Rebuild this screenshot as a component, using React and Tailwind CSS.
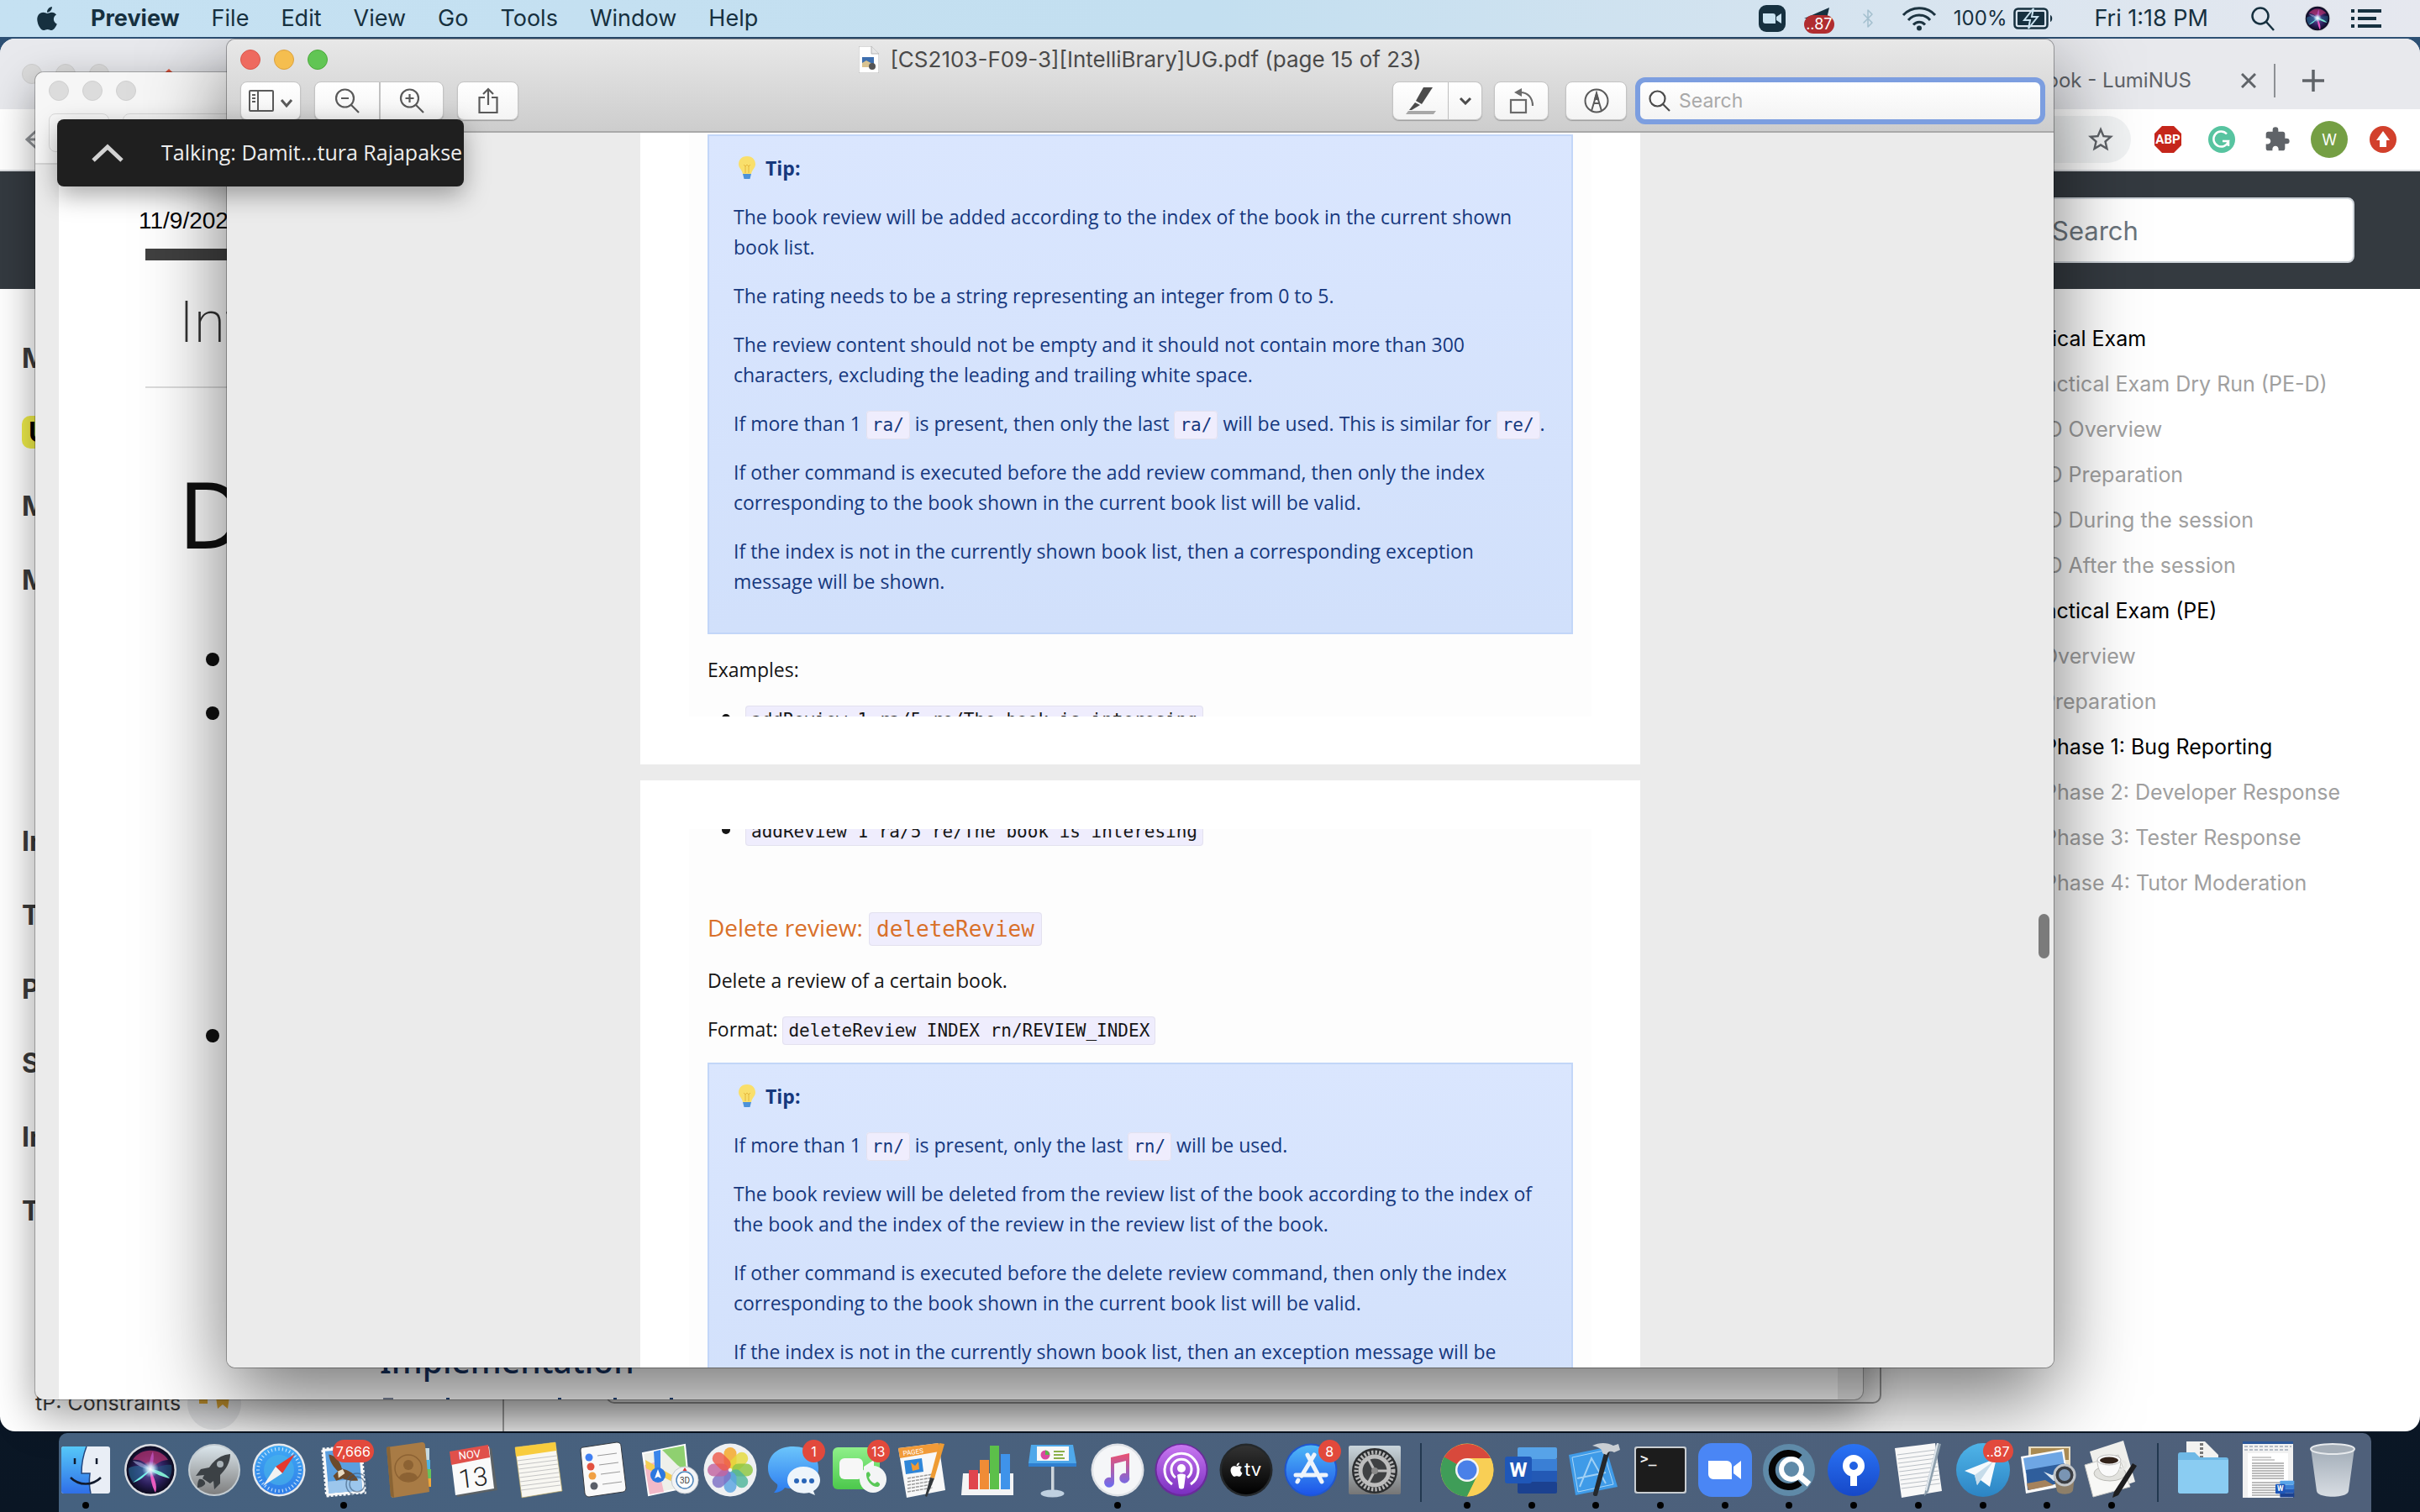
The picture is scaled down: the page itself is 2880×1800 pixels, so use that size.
import React from "react";
import { FaApple } from "react-icons/fa";
import { MdExtension, MdStarBorder } from "react-icons/md";
import { Bluetooth } from "lucide-react";

/* ---------- shared ---------- */

function Grad({ id, from, to, x2 = 0, y2 = 1 }) {
  return (
    <linearGradient id={id} x1="0" y1="0" x2={x2} y2={y2}>
      <stop offset="0" stopColor={from} />
      <stop offset="1" stopColor={to} />
    </linearGradient>
  );
}

function Icon({ children }) {
  return (
    <svg viewBox="0 0 64 64" className="block h-16 w-16 overflow-visible" aria-hidden="true">
      {children}
    </svg>
  );
}

function SiriArt({ id }) {
  return (
    <>
      <defs>
        <radialGradient id={id} cx="0.5" cy="0.5" r="0.5">
          <stop offset="0" stopColor="#6a5aa8" />
          <stop offset="0.6" stopColor="#2c1f5c" />
          <stop offset="1" stopColor="#0b0a1e" />
        </radialGradient>
        <radialGradient id={`${id}Glow`} cx="0.5" cy="0.5" r="0.5">
          <stop offset="0" stopColor="#fff" />
          <stop offset="0.4" stopColor="#d8f4ff" stopOpacity="0.8" />
          <stop offset="1" stopColor="#8fd8ff" stopOpacity="0" />
        </radialGradient>
      </defs>
      <circle cx="32" cy="32" r="31" fill="#d9dce2" />
      <circle cx="32" cy="32" r="28.500" fill={`url(#${id})`} />
      <path d="M11 20C20 5 44 5 53 20C46 20 40 24 32 30C26 22 18 19 11 20Z" fill="#b8326f" opacity=".7" />
      <path d="M6 30C14 25 25 27 32 32C26 38 18 44 11 46C7 40 6 36 6 30Z" fill="#2a6f9a" opacity=".6" />
      <path d="M57 26C50 25 40 28 32 32C40 36 48 40 54 42C57 38 58 32 57 26Z" fill="#1f5f86" opacity=".5" />
      <path d="M32 32C27 38 18 46 11 47C19 41 26 35 32 32Z" fill="#6ff0e4" />
      <path d="M32 32C36 40 41 50 38 59C35 54 31 42 32 32Z" fill="#ea5cc0" />
      <path d="M32 31C40 31 50 36 55 42C46 40 38 37 32 32Z" fill="#7fe8d0" />
      <path d="M31 32C30 24 32 16 35 10C37 18 35 26 32 32Z" fill="#c65ad0" opacity=".7" />
      <path d="M32 32C22 30 14 25 11 21C20 22 28 26 32 32Z" fill="#b9c8f0" opacity=".5" />
      <circle cx="32" cy="31" r="10" fill={`url(#${id}Glow)`} />
    </>
  );
}

/* ---------- menu bar ---------- */

function WifiIcon() {
  return (
    <svg viewBox="0 0 42 30" className="h-[30px] w-[42px]" fill="none" stroke="#1c3340" strokeWidth="3">
      <path d="M2 11C12 0 30 0 40 11" />
      <path d="M8 17C15 9 27 9 34 17" />
      <path d="M14 22.500C18 18 24 18 28 22.500" />
      <circle cx="21" cy="26.500" r="3" fill="#1c3340" stroke="none" />
    </svg>
  );
}

function MenuBar() {
  return (
    <header className="relative z-50 flex h-11 items-center justify-between bg-gradient-to-r from-[#c5e1f2] via-[#c3dff0] to-[#e6e8ef] pr-[46px] pl-[42px] text-[27px] text-[#16303f]">
      <nav className="flex items-center gap-[38px]">
        <FaApple className="h-8 w-7" />
        <b className="font-bold">Preview</b>
        <span>File</span>
        <span>Edit</span>
        <span>View</span>
        <span>Go</span>
        <span>Tools</span>
        <span>Window</span>
        <span>Help</span>
      </nav>
      <div className="flex items-center">
        <svg viewBox="0 0 32 32" className="mr-[22px] h-8 w-8">
          <rect width="32" height="32" rx="9" fill="#16303f" />
          <path d="M5 10h12a3 3 0 0 1 3 3v9H8a3 3 0 0 1-3-3zM21 14l6-4v12l-6-4z" fill="#c9e2f0" />
        </svg>
        <div className="relative mr-7 h-8 w-9">
          <svg viewBox="0 0 36 32" className="h-8 w-9">
            <path d="M0 16L30 3L27 16L10 16Z" fill="#16303f" />
          </svg>
          <span className="absolute top-3 left-0 flex h-[22px] w-9 items-center justify-center rounded-full bg-[#b02d30] text-[18px] leading-none text-white">..87</span>
        </div>
        <Bluetooth className="mr-7 h-8 w-6 text-[#a3bfce]" strokeWidth={1.5} />
        <WifiIcon />
        <span className="ml-5 text-[24px]">100%</span>
        <svg viewBox="0 0 48 26" className="ml-2 h-[26px] w-12" fill="none" stroke="#16303f" strokeWidth="2.500">
          <rect x="1.500" y="1.500" width="39" height="23" rx="4" />
          <path d="M44 9v8c3-1 3-7 0-8z" fill="#16303f" stroke="none" />
          <rect x="5" y="5" width="32" height="16" rx="1" fill="#16303f" stroke="none" />
          <path d="M24 1L13 15h7l-2 10 11-14h-7z" fill="#16303f" stroke="#c9e2f0" strokeWidth="2" />
        </svg>
        <span className="ml-12">Fri 1:18 PM</span>
        <svg viewBox="0 0 30 30" className="ml-[50px] h-[30px] w-[30px]" fill="none" stroke="#16303f" strokeWidth="2.500">
          <circle cx="12" cy="12" r="9.500" />
          <path d="M19 19l9 10" />
        </svg>
        <svg viewBox="0 0 64 64" className="ml-[34px] h-8 w-8">
          <SiriArt id="siriSmall" />
        </svg>
        <svg viewBox="0 0 36 22" className="ml-6 h-[22px] w-9" fill="#16303f">
          <rect y="0" width="4" height="4" /><rect x="8" y="0" width="28" height="4" />
          <rect y="9" width="4" height="4" /><rect x="8" y="9" width="22" height="4" />
          <rect y="18" width="4" height="4" /><rect x="8" y="18" width="28" height="4" />
        </svg>
      </div>
    </header>
  );
}

/* ---------- browser window ---------- */

const sideTop = ["M", "U", "M", "M"];
const sideBottom = ["In", "T", "P", "S", "In", "T"];
const toc = [
  { t: "Practical Exam", c: "ml-0 text-black" },
  { t: "Practical Exam Dry Run (PE-D)", c: "ml-7 text-[#a0a0a0]" },
  { t: "PE-D Overview", c: "ml-[14px] text-[#a0a0a0]" },
  { t: "PE-D Preparation", c: "ml-[14px] text-[#a0a0a0]" },
  { t: "PE-D During the session", c: "ml-[14px] text-[#a0a0a0]" },
  { t: "PE-D After the session", c: "ml-[14px] text-[#a0a0a0]" },
  { t: "Practical Exam (PE)", c: "ml-7 text-black" },
  { t: "Overview", c: "ml-[50px] text-[#a0a0a0]" },
  { t: "Preparation", c: "ml-[50px] text-[#a0a0a0]" },
  { t: "Phase 1: Bug Reporting", c: "ml-[52px] text-black" },
  { t: "Phase 2: Developer Response", c: "ml-[52px] text-[#a0a0a0]" },
  { t: "Phase 3: Tester Response", c: "ml-[52px] text-[#a0a0a0]" },
  { t: "Phase 4: Tutor Moderation", c: "ml-[52px] text-[#a0a0a0]" },
];

function GreyLights() {
  return (
    <>
      {[0, 1, 2].map((i) => (
        <span key={i} className="h-6 w-6 rounded-full border border-[#cfcfcf] bg-[#dcdcdc]" />
      ))}
    </>
  );
}

function BrowserWindow() {
  return (
    <section className="absolute inset-x-0 top-[46px] bottom-24 flex flex-col overflow-hidden rounded-[18px] bg-white">
      <div className="flex h-[84px] items-center justify-between bg-[#e8e9ed] pl-[26px]">
        <div className="flex items-center gap-4">
          <GreyLights />
          <svg viewBox="0 0 30 26" className="ml-10 h-[26px] w-[30px]" fill="none" stroke="#e0553c" strokeWidth="3"><path d="M2 21L15 9L28 21" /></svg>
        </div>
        <div className="flex items-center pt-4 pr-[114px] text-[24px] text-[#5f6368]">
          <span>iLecture Book - LumiNUS</span>
          <svg viewBox="0 0 18 18" className="ml-[59px] h-[18px] w-[18px]" stroke="#5f6368" strokeWidth="3"><path d="M1 1L17 17M17 1L1 17" /></svg>
          <span className="ml-[21px] h-10 w-0.5 bg-[#8d9094]" />
          <svg viewBox="0 0 26 26" className="ml-8 h-[26px] w-[26px]" stroke="#5f6368" strokeWidth="3.500"><path d="M13 0V26M0 13H26" /></svg>
        </div>
      </div>
      <div className="flex h-[74px] items-center justify-between border-b-2 border-[#dadce0] bg-white pr-7 pl-[30px]">
        <svg viewBox="0 0 26 26" className="h-[26px] w-[26px]" fill="none" stroke="#8f9296" strokeWidth="3"><path d="M14 2L2 13L14 24M2 13H26" /></svg>
        <div className="flex items-center">
          <div className="mr-7 flex h-14 w-[600px] items-center justify-end rounded-full bg-[#f1f3f4] pr-[18px]">
            <MdStarBorder className="h-9 w-9 text-[#5f6368]" />
          </div>
          <svg viewBox="0 0 32 32" className="mr-8 h-8 w-8">
            <path d="M9 0h14l9 9v14l-9 9H9l-9-9V9z" fill="#c5261b" />
            <text x="16" y="21" textAnchor="middle" fontSize="15" fontWeight="700" fill="#fff" fontFamily="Roboto">ABP</text>
          </svg>
          <svg viewBox="0 0 32 32" className="mr-[34px] h-8 w-8">
            <circle cx="16" cy="16" r="16" fill="#57c4a0" />
            <path d="M22 9.500A9 9 0 1 0 24 18H17M24 18V24" fill="none" stroke="#fff" strokeWidth="2.500" />
          </svg>
          <MdExtension className="mr-6 h-8 w-8 text-[#5f6368]" />
          <span className="mr-[26px] flex h-11 w-11 items-center justify-center rounded-full bg-[#759f44] text-[18px] text-white">W</span>
          <svg viewBox="0 0 32 32" className="h-8 w-8">
            <circle cx="16" cy="16" r="16" fill="#d2402c" />
            <path d="M16 6l8 11h-4v8h-8v-8H8z" fill="#fff" />
          </svg>
        </div>
      </div>
      <div className="flex h-[140px] items-center justify-end bg-[#343a40] pr-[78px]">
        <input
          aria-label="Search"
          placeholder="Search"
          className="h-[78px] w-[382px] rounded-lg border-2 border-[#ced4da] bg-white pl-5 text-[31px] text-[#6c757d] placeholder:text-[#6c757d]"
        />
      </div>
      <div className="flex flex-1 justify-between">
        <ul className="w-14 pt-[39px] pl-[26px] text-[32px] leading-[88px] font-bold text-[#3b3b3b]">
          {sideTop.map((s, i) => (
            <li key={i}>
              {s === "U" ? <span className="rounded-[10px] bg-[#f0ee4a] px-2 text-black">{s}</span> : s}
            </li>
          ))}
          <li className="h-[223px]" />
          {sideBottom.map((s, i) => (
            <li key={i}>{s}</li>
          ))}
        </ul>
        <ul className="w-[500px] pt-8 text-[25px] leading-[54px] whitespace-nowrap">
          {toc.map((r) => (
            <li key={r.t} className={r.c}>{r.t}</li>
          ))}
        </ul>
      </div>
      <div className="absolute bottom-0 left-0 flex h-[60px] w-[600px] items-center border-r-2 border-[#a5a5a5] pb-1.5 pl-[42px]">
        <span className="text-[25px] text-[#3a3a3a]">tP: Constraints</span>
        <span className="ml-2 flex h-[62px] w-16 items-center justify-center rounded-full bg-[#ecedef]">
          <svg viewBox="0 0 44 20" className="h-5 w-11" fill="#dca636"><path d="M4 5h10v5H4zM24 2h16l-2 14-6-5-6 5z" /></svg>
        </span>
      </div>
      <div className="absolute right-[641px] bottom-[33px] left-[721px] h-40 rounded-[10px] border-2 border-[#a0a0a0]" />
    </section>
  );
}

/* ---------- document window behind ---------- */

function BackWindow() {
  return (
    <section className="absolute top-[86px] right-[663px] bottom-[134px] left-[42px] flex flex-col overflow-hidden rounded-[10px] bg-[#ebebeb] shadow-[0_0_0_1px_rgba(0,0,0,0.25),0_18px_50px_rgba(0,0,0,0.4)]">
      <div className="h-[110px] border-b-2 border-[#d6d6d6] bg-[#f6f6f6] px-4 pt-[10px]">
        <div className="flex gap-4"><GreyLights /></div>
        <div className="mt-[15px] flex gap-4">
          <span className="h-[46px] w-[72px] rounded-lg border border-[#dadada] bg-[#f8f8f8]" />
          <span className="h-[46px] w-[150px] rounded-lg border border-[#dadada] bg-[#f8f8f8]" />
        </div>
      </div>
      <div className="mr-[30px] ml-7 flex flex-1 flex-col bg-white">
        <p className="mt-[47px] ml-[95px] font-[Liberation_Sans] text-[28px] leading-[40px] text-black">11/9/2020</p>
        <div className="mt-[13px] ml-[103px] h-[14px] bg-[#404040]" />
        <p className="mt-[32px] ml-[143px] font-[Roboto] text-[68px] leading-[84px] font-extralight text-[#333]">IntelliBrary</p>
        <div className="mt-[34px] ml-[103px] h-0.5 shrink-0 bg-[#dcdcdc]" />
        <h2 className="mt-[78px] ml-[142px] font-[Noto_Sans] text-[110px] leading-[140px] text-[#101010]">Developer Guide</h2>
        <ul className="mt-[97px] ml-[175px]">
          <li className="h-16"><span className="block h-4 w-4 rounded-full bg-[#101010]" /></li>
          <li className="h-[384px]"><span className="block h-4 w-4 rounded-full bg-[#101010]" /></li>
          <li><span className="block h-4 w-4 rounded-full bg-[#101010]" /></li>
        </ul>
        <h3 className="mt-auto ml-[382px] font-[Noto_Sans] text-[39px] leading-[54px] font-medium text-[#16325f]">Implementation</h3>
        <div className="mt-[17px] ml-[386px] flex h-0.5 justify-between pr-[1386px]">
          <i className="w-3 bg-[#7d879b]" /><i className="w-1 bg-[#24457a]" /><i className="w-1" /><i className="w-1 bg-[#24457a]" /><i className="w-1 bg-[#24457a]" /><i className="w-1 bg-[#24457a]" />
        </div>
      </div>
    </section>
  );
}

/* ---------- Preview window ---------- */

function ToolButton({ label, className, children }) {
  return (
    <button
      type="button"
      aria-label={label}
      className={`flex h-[46px] items-center justify-center border border-[#c4c4c4] bg-gradient-to-b from-white to-[#f4f4f4] shadow-[0_1px_1px_rgba(0,0,0,0.25)] ${className}`}
    >
      {children}
    </button>
  );
}

function Toolbar() {
  return (
    <div className="flex items-center justify-between pr-[10px] pl-4">
      <div className="flex items-center">
        <ToolButton label="Sidebar" className="mr-4 w-[72px] rounded-lg">
          <svg viewBox="0 0 54 28" className="h-7 w-[54px]" fill="none" stroke="#5a5a5a" strokeWidth="2">
            <rect x="2" y="2" width="28" height="24" rx="1" />
            <path d="M12 2V26M5 7h4M5 11h4M5 15h4" />
            <path d="M40 13l6 7 6-7" strokeWidth="3" />
          </svg>
        </ToolButton>
        <ToolButton label="Zoom out" className="w-[78px] rounded-l-lg">
          <svg viewBox="0 0 30 30" className="h-[30px] w-[30px]" fill="none" stroke="#5a5a5a" strokeWidth="2.200">
            <circle cx="12.500" cy="12" r="10.500" /><path d="M20 20l9 9M8 12h9" />
          </svg>
        </ToolButton>
        <ToolButton label="Zoom in" className="mr-4 w-[76px] rounded-r-lg">
          <svg viewBox="0 0 30 30" className="h-[30px] w-[30px]" fill="none" stroke="#5a5a5a" strokeWidth="2.200">
            <circle cx="12.500" cy="12" r="10.500" /><path d="M20 20l9 9M7.500 12h10M12.500 7v10" />
          </svg>
        </ToolButton>
        <ToolButton label="Share" className="w-[73px] rounded-lg">
          <svg viewBox="0 0 26 32" className="h-8 w-[26px]" fill="none" stroke="#5a5a5a" strokeWidth="2.200">
            <path d="M9 12H2.500V30H23.500V12H17M13 21V2M7 8l6-6 6 6" />
          </svg>
        </ToolButton>
      </div>
      <div className="flex items-center">
        <ToolButton label="Highlight" className="w-[67px] rounded-l-lg">
          <svg viewBox="0 0 38 34" className="h-[34px] w-[38px]">
            <path d="M22 1H33L20 21L13 17Z" fill="#4b4b4b" />
            <path d="M12 19L18 22L8 28H5Z" fill="#4b4b4b" />
            <path d="M4 29H37L34 33H1Z" fill="#a8a8a8" />
          </svg>
        </ToolButton>
        <ToolButton label="Highlight colour" className="mr-[14px] w-10 rounded-r-lg border-l-0">
          <svg viewBox="0 0 16 10" className="h-[10px] w-4" fill="none" stroke="#4b4b4b" strokeWidth="3"><path d="M2 2l6 6 6-6" /></svg>
        </ToolButton>
        <ToolButton label="Rotate" className="mr-5 w-[65px] rounded-lg">
          <svg viewBox="0 0 32 32" className="h-8 w-8" fill="none" stroke="#6a6a6a" strokeWidth="2.200">
            <rect x="3" y="15" width="18" height="15" /><path d="M14 6C24 6 29 13 29 22" /><path d="M7 6l9-5v10z" fill="#6a6a6a" stroke="none" />
          </svg>
        </ToolButton>
        <ToolButton label="Markup" className="mr-[10px] w-[73px] rounded-lg">
          <svg viewBox="0 0 30 30" className="h-[30px] w-[30px]" fill="none" stroke="#5a5a5a" strokeWidth="2">
            <circle cx="15" cy="15" r="13.500" /><path d="M9 27L15 7L21 27M12.500 18h5" /><path d="M13 13l2-7 2 7z" fill="#5a5a5a" />
          </svg>
        </ToolButton>
        <label className="flex h-14 w-[488px] items-center gap-[10px] rounded-xl border-[6px] border-[#7c9ee0] bg-gradient-to-b from-white to-[#f4f4f4] pl-[10px]">
          <svg viewBox="0 0 26 26" className="h-[26px] w-[26px]" fill="none" stroke="#4a4a4a" strokeWidth="2.200">
            <circle cx="10.500" cy="10.500" r="9" /><path d="M17 17l8 8" />
          </svg>
          <input aria-label="Search document" placeholder="Search" className="min-w-0 flex-1 bg-transparent text-[23px] outline-none placeholder:text-[#a9a9a9]" />
        </label>
      </div>
    </div>
  );
}

function Code({ children }) {
  return (
    <code className="rounded-[4px] border border-[#e3e1ef] bg-[#efedfd] px-1.5 py-1 font-[DejaVu_Sans_Mono] text-[21px] leading-none">{children}</code>
  );
}

function Bulb() {
  return (
    <svg viewBox="0 0 20 28" className="mr-3 ml-1.5 h-7 w-5">
      <path d="M10 0C3 0 0 5 0 9.500C0 14 4 16 5 21H15C16 16 20 14 20 9.500C20 5 17 0 10 0Z" fill="#f9df6b" />
      <path d="M6 10l2 2 2-2 2 2 2-2M8 12v8M12 12v8" stroke="#e4b63c" fill="none" />
      <path d="M5 21H15L13.500 27H6.500Z" fill="#4d92d8" />
    </svg>
  );
}

function Tip({ children }) {
  return (
    <div className="flex flex-col gap-[22px] border-2 border-[#c2d6f8] bg-gradient-to-b from-[#dae6fe] to-[#d1e0fb] px-[29px] pt-5 pb-[43px] whitespace-nowrap text-[#16387d]">
      <p className="flex items-center font-bold"><Bulb />Tip:</p>
      {children}
    </div>
  );
}

function AddReviewItem() {
  return (
    <ul>
      <li className="flex items-center pl-[17px]">
        <span className="mr-[18px] h-[10px] w-[10px] rounded-full bg-[#151515]" />
        <span><Code>addReview 1 ra/5 re/The book is interesing</Code></span>
      </li>
    </ul>
  );
}

function Document() {
  return (
    <div className="relative flex min-h-0 flex-1 flex-col items-center gap-[19px] overflow-hidden bg-[#ebebeb] font-[Open_Sans] text-[23px] leading-[36px] text-[#151515]">
      <article className="w-[1190px] shrink-0 bg-white px-[58px] pb-[57px]">
        <div className="h-[695px] overflow-hidden bg-[#fdfdfd] px-[22px] pt-0.5">
          <Tip>
            <p>The book review will be added according to the index of the book in the current shown<br />book list.</p>
            <p>The rating needs to be a string representing an integer from 0 to 5.</p>
            <p>The review content should not be empty and it should not contain more than 300<br />characters, excluding the leading and trailing white space.</p>
            <p>If more than 1 <Code>ra/</Code> is present, then only the last <Code>ra/</Code> will be used. This is similar for <Code>re/</Code>.</p>
            <p>If other command is executed before the add review command, then only the index<br />corresponding to the book shown in the current book list will be valid.</p>
            <p>If the index is not in the currently shown book list, then a corresponding exception<br />message will be shown.</p>
          </Tip>
          <p className="mt-6 mb-[22px]">Examples:</p>
          <AddReviewItem />
        </div>
      </article>
      <article className="w-[1190px] shrink-0 bg-white px-[58px] pt-[58px]">
        <div className="overflow-hidden bg-[#fdfdfd] px-[22px]">
          <div className="-mt-[17px]"><AddReviewItem /></div>
          <h3 className="mt-[76px] text-[28px] leading-[44px] text-[#d9702a]">
            Delete review: <code className="rounded-[4px] border border-[#e3e1ef] bg-[#efedfd] px-2 py-1 font-[DejaVu_Sans_Mono] text-[26px] leading-none">deleteReview</code>
          </h3>
          <p className="mt-[23px]">Delete a review of a certain book.</p>
          <p className="mt-[22px] mb-[22px]">Format: <Code>deleteReview INDEX rn/REVIEW_INDEX</Code></p>
          <Tip>
            <p>If more than 1 <Code>rn/</Code> is present, only the last <Code>rn/</Code> will be used.</p>
            <p>The book review will be deleted from the review list of the book according to the index of<br />the book and the index of the review in the review list of the book.</p>
            <p>If other command is executed before the delete review command, then only the index<br />corresponding to the book shown in the current book list will be valid.</p>
            <p>If the index is not in the currently shown book list, then an exception message will be<br />shown.</p>
          </Tip>
        </div>
      </article>
      <span className="absolute top-[930px] right-[5px] h-[53px] w-[13px] rounded-full bg-[#7b7b7b]" />
    </div>
  );
}

function PreviewWindow() {
  return (
    <section className="absolute top-[47px] right-[436px] bottom-[172px] left-[270px] flex flex-col overflow-hidden rounded-[10px] shadow-[0_0_0_1px_rgba(0,0,0,0.3),0_36px_100px_rgba(0,0,0,0.55)]">
      <div className="flex h-[111px] flex-col border-b-2 border-[#a9a9a9] bg-gradient-to-b from-[#e8e8e8] to-[#cdcdcd]">
        <div className="flex h-[45px] items-center justify-center pt-0.5">
          <div className="flex flex-1 gap-4 pl-4">
            <span className="h-6 w-6 rounded-full border border-[#d9574b] bg-[#ee6a5f]" />
            <span className="h-6 w-6 rounded-full border border-[#dba13f] bg-[#f5be4f]" />
            <span className="h-6 w-6 rounded-full border border-[#4ca93c] bg-[#61c554]" />
          </div>
          <h1 className="flex items-center gap-[13px] text-[26px] text-[#4a4a4a]">
            <svg viewBox="0 0 24 32" className="h-8 w-6">
              <path d="M0 0H15L24 9V32H0Z" fill="#fff" stroke="#b5b5b5" />
              <path d="M15 0V9H24" fill="#e6e6e6" stroke="#b5b5b5" />
              <rect x="4" y="13" width="14" height="12" fill="#3e6fae" /><path d="M4 20l5-3 9 5v3H4z" fill="#d9c391" /><circle cx="16" cy="24" r="4" fill="#555" />
            </svg>
            [CS2103-F09-3][IntelliBrary]UG.pdf (page 15 of 23)
          </h1>
          <div className="flex-1 pr-4" />
        </div>
        <Toolbar />
      </div>
      <Document />
    </section>
  );
}

function TalkingBar() {
  return (
    <aside className="absolute top-[142px] left-[68px] flex h-20 w-[484px] items-center gap-[45px] overflow-hidden rounded-lg bg-[#1f1f1f] pl-[41px] shadow-[0_10px_30px_rgba(0,0,0,0.35)]">
      <svg viewBox="0 0 38 22" className="h-[22px] w-[38px] shrink-0" fill="none" stroke="#d2d2d2" strokeWidth="5"><path d="M2 20L19 4L36 20" /></svg>
      <span className="font-[Open_Sans] text-[25px] whitespace-nowrap text-[#ededed]">Talking: Damit...tura Rajapakse</span>
    </aside>
  );
}

/* ---------- dock icons ---------- */

const rays = Array.from({ length: 36 }, (_, i) => i * 10);

const Finder = () => (
  <Icon>
    <defs><Grad id="fnd" from="#56c8f8" to="#2f6fe8" /></defs>
    <rect x="3" y="4" width="58" height="56" rx="3" fill="#e9eef6" />
    <path d="M6 4H33C29 14 27 24 27 36H37C36 44 36 52 38 60H6a3 3 0 0 1-3-3V7a3 3 0 0 1 3-3z" fill="url(#fnd)" />
    <path d="M33 4C29 14 27 24 27 36H37C36 44 36 52 38 60" fill="none" stroke="#23457c" strokeWidth="1.500" />
    <path d="M19 18v7M45 18v7" stroke="#111a2c" strokeWidth="2.500" />
    <path d="M14 41C24 51 40 51 50 41" fill="none" stroke="#111a2c" strokeWidth="2.500" />
  </Icon>
);
const Siri = () => <Icon><SiriArt id="siriDock" /></Icon>;
const Launchpad = () => (
  <Icon>
    <defs><Grad id="lp" from="#dbe6ec" to="#7f7f7f" /></defs>
    <circle cx="32" cy="32" r="31" fill="#c3ccd2" /><circle cx="32" cy="32" r="29" fill="url(#lp)" />
    <path d="M51 13C40 14 32 20 26 29L16 31L10 39L20 38L18 42L27 48L31 45L32 55L39 48L39 38C46 31 51 23 51 13Z" fill="#3c4145" />
    <circle cx="39" cy="25" r="4" fill="#a9b2b7" /><path d="M14 43C18 42 22 46 21 49C18 52 15 53 12 53C12 49 12 46 14 43Z" fill="#3c4145" />
  </Icon>
);
const Safari = () => (
  <Icon>
    <defs><Grad id="sf" from="#3fa9f5" to="#2f7de8" /></defs>
    <circle cx="32" cy="32" r="31.500" fill="#e7e9ec" /><circle cx="32" cy="32" r="29" fill="url(#sf)" /><circle cx="32" cy="32" r="18" fill="#4ab6ea" opacity=".6" />
    {rays.map((a) => <path key={a} d="M32 5V9" stroke="#d8ecfb" strokeWidth="1" transform={`rotate(${a} 32 32)`} />)}
    <path d="M51 13L36 36L28 28Z" fill="#e5392f" /><path d="M13 51L28 28L36 36Z" fill="#f2f2f2" />
  </Icon>
);
const Mail = () => (
  <Icon>
    <g transform="rotate(-5 32 32)">
      <rect x="9" y="5" width="46" height="56" fill="#f8f8f8" stroke="#f8f8f8" strokeWidth="3" strokeDasharray="3 2" />
      <rect x="12" y="8" width="40" height="50" fill="#5a9fe0" />
      <path d="M12 44h40v14H12z" fill="#9cc6ec" />
      <path d="M16 12C24 14 29 22 30 30C38 33 46 38 48 46C40 46 34 44 30 42L22 44L19 38L25 33C20 27 16 20 16 12Z" fill="#6b4a2c" />
      <path d="M25 33l6-2 2 5-8 5z" fill="#e8dcc4" />
    </g>
    <circle cx="48" cy="49" r="13" fill="none" stroke="#3b5878" strokeWidth="1.500" opacity=".6" /><circle cx="48" cy="49" r="9" fill="none" stroke="#3b5878" strokeWidth="1.500" opacity=".6" />
  </Icon>
);
const Contacts = () => (
  <Icon>
    <rect x="50" y="6" width="7" height="14" fill="#c6dbe2" /><rect x="51" y="20" width="7" height="11" fill="#4fb4e4" /><rect x="52" y="31" width="7" height="11" fill="#65c45a" /><rect x="53" y="42" width="6" height="10" fill="#f0a73a" />
    <path d="M6 5L48 -1C51 -1 52 1 52 3L57 58L14 65C12 65 11 63 11 62Z" fill="#a87b45" />
    <path d="M6 5L10 4L15 65L11 63Z" fill="#8a6434" />
    <circle cx="32" cy="30" r="16" fill="none" stroke="#8c6233" strokeWidth="1.500" /><circle cx="32" cy="26" r="6" fill="#8c6233" /><path d="M21 41C23 33 41 33 43 41C38 47 26 47 21 41Z" fill="#8c6233" />
  </Icon>
);
const Calendar = () => (
  <Icon>
    <path d="M8 14L55 6L62 56L14 64Z" fill="#5c6266" />
    <path d="M6 12L52 4L58 54L12 62Z" fill="#fafafa" /><path d="M5 10L51 2L53 17L7 26Z" fill="#e0504a" />
    <g fontFamily="Roboto" textAnchor="middle" transform="rotate(-7 32 32)">
      <text x="31" y="18" fontSize="13" fill="#fff">NOV</text><text x="32" y="52" fontSize="31" fontWeight="300" fill="#222">13</text>
    </g>
  </Icon>
);
const Notes = () => (
  <Icon>
    <path d="M6 5L54 -1L62 57L14 65Z" fill="#f8f7f2" stroke="#b6a35e" strokeWidth=".7" /><path d="M6 5L54 -1L55 9L7 16Z" fill="#f8cc3d" />
    {[21, 26, 31, 36, 41, 46, 51, 56].map((y) => <path key={y} d={`M${8 + (y - 16) / 8} ${y}l47 -6`} stroke="#c5c5c5" />)}
  </Icon>
);
const Reminders = () => (
  <Icon>
    <path d="M10 5L50 -1C53 -1 55 1 55 3L61 53C61 56 60 57 58 58L17 64C14 64 13 62 12 60L7 9C7 6 8 5 10 5Z" fill="#f9f9f9" stroke="#363a40" strokeWidth="1" />
    {[["#3f7ff2", 17], ["#e3513f", 28], ["#f0a043", 39], ["#5a5f68", 51]].map(([c, y], i) => (
      <g key={y}><circle cx={17 + i * 2} cy={y} r="4.500" fill={c} /><path d={`M${27 + i * 2} ${y - 2}l23 -3`} stroke="#9a9a9a" /></g>
    ))}
  </Icon>
);
const Maps = () => (
  <Icon>
    <path d="M5 12L55 2L60 52L12 62Z" fill="#eef0ea" stroke="#fff" strokeWidth="2" />
    <path d="M7 26L22 22L30 58L13 61Z" fill="#f3b9c8" /><path d="M28 8L54 3L57 34L46 26Z" fill="#8fd070" /><path d="M8 20L50 44L52 52L9 30Z" fill="#f5cf53" />
    <path d="M18 10L26 8V40L20 42Z" fill="#3a86ea" /><circle cx="23" cy="38" r="9" fill="#2d78e0" /><path d="M23 31l4 11-4-2-4 2z" fill="#fff" />
    <circle cx="55" cy="44" r="16" fill="#f2f4f6" stroke="#c5c9cd" /><circle cx="55" cy="44" r="10" fill="#fff" stroke="#4f86bb" strokeWidth="1.500" />
    <text x="55" y="48" fontSize="10" textAnchor="middle" fill="#444" fontFamily="Roboto">3D</text><path d="M55 29l2.500 4h-5z" fill="#d33" />
  </Icon>
);
const Photos = () => (
  <Icon>
    <circle cx="32" cy="32" r="31.500" fill="#eef0f2" />
    {["#f5a623", "#e5d93c", "#8cc63f", "#4fb59a", "#5aa4e0", "#7d6fc4", "#c263a0", "#ee5a4a"].map((c, i) => (
      <rect key={c} x="24.500" y="5" width="15" height="25" rx="7.500" fill={c} opacity=".82" transform={`rotate(${i * 45} 32 32)`} />
    ))}
  </Icon>
);
const Messages = () => (
  <Icon>
    <defs><Grad id="ms" from="#6cc5fb" to="#2c7cf0" /></defs>
    <path d="M30 4C50 4 60 16 60 30C60 46 46 54 30 54C26 54 23 54 20 53C17 57 12 59 7 59C10 56 12 52 11 49C4 44 0 38 0 30C0 14 12 4 30 4Z" fill="url(#ms)" />
    <path d="M42 28C54 28 62 35 62 44C62 50 58 55 54 57L56 62L49 59C34 62 23 54 23 44C23 35 31 28 42 28Z" fill="#eef5fb" />
    <circle cx="34" cy="45" r="3" fill="#2a66b8" /><circle cx="43" cy="45" r="3" fill="#2a66b8" /><circle cx="52" cy="45" r="3" fill="#2a66b8" />
  </Icon>
);
const FaceTime = () => (
  <Icon>
    <defs><Grad id="ft" from="#8ff08a" to="#4cc84c" /></defs>
    <rect x="0" y="5" width="56" height="50" rx="6" fill="url(#ft)" /><rect x="8" y="18" width="28" height="25" rx="6" fill="#f7f7f7" /><path d="M37 28l12-8v20l-12-6z" fill="#f7f7f7" />
    <circle cx="48" cy="43" r="16" fill="#f3f5f5" /><path d="M40 36C42 33 44 34 45 38L43 41C44 44 47 47 50 48L53 46C57 48 57 50 54 52C47 53 39 44 40 36Z" fill="#59c857" />
  </Icon>
);
const Pages = () => (
  <Icon>
    <path d="M2 6L50 0L58 56L12 65Z" fill="#f8f8f8" /><path d="M2 6L50 0L51 10L4 18Z" fill="#f19a38" />
    <text x="8" y="15" fontSize="8" fill="#fff" fontFamily="Roboto" transform="rotate(-8 8 15)">PAGES</text>
    <path d="M9 21L30 18L32 34L11 37Z" fill="#2f86d8" /><path d="M17 23l5 4 4-5 1 9-8 2z" fill="#f39a30" />
    {[42, 46, 50, 54, 58].map((y) => <path key={y} d={`M13 ${y}l30 -5`} stroke="#9a9a9a" strokeWidth="1.500" strokeDasharray="4 1" />)}
    <path d="M51 0L57 1L45 42L40 41Z" fill="#ee9b33" /><path d="M40 41L45 42L36 64L34 63Z" fill="#33373b" />
  </Icon>
);
const Numbers = () => (
  <Icon>
    <path d="M2 36H62V62H0Z" fill="#f3f4f5" />
    <rect x="9" y="32" width="11" height="23" fill="#e0454e" /><rect x="22" y="20" width="11" height="35" fill="#f08c36" /><rect x="34" y="3" width="11" height="52" fill="#5cc04a" /><rect x="47" y="13" width="11" height="42" fill="#3f93ea" />
  </Icon>
);
const Keynote = () => (
  <Icon>
    <path d="M6 2H56L60 24H3Z" fill="#4fa8ea" /><path d="M3 24H60V28H3Z" fill="#2f7fd0" /><rect x="13" y="4" width="38" height="17" fill="#f8f8f8" />
    <circle cx="23" cy="14" r="5.500" fill="#d94aa0" /><path d="M23 14V8.500A5.500 5.500 0 0 1 28 14Z" fill="#58b84a" /><path d="M33 10h13M33 14h11M33 18h13" stroke="#8bb04a" strokeWidth="2" />
    <rect x="30" y="28" width="3.500" height="32" fill="#cdd5dc" /><ellipse cx="31.500" cy="60" rx="14" ry="4.500" fill="#bfd0e0" />
  </Icon>
);
const Music = () => (
  <Icon>
    <defs><Grad id="mu" from="#ec5170" to="#6a6cf0" /></defs>
    <circle cx="32" cy="32" r="31.500" fill="#dfe2e7" /><circle cx="32" cy="32" r="29" fill="#f5f6f8" />
    <path d="M24 17L46 12V40A6 6 0 1 1 42 36V21L28 24.500V46A6 6 0 1 1 24 41Z" fill="url(#mu)" />
  </Icon>
);
const Podcasts = () => (
  <Icon>
    <defs><Grad id="pc" from="#c877f0" to="#7a2fc0" /></defs>
    <circle cx="32" cy="32" r="31.500" fill="#6a2a9c" /><circle cx="32" cy="31.500" r="29.500" fill="url(#pc)" />
    <path d="M21 49A20 20 0 1 1 43 49M25 41A12 12 0 1 1 39 41" fill="none" stroke="#fff" strokeWidth="3" />
    <circle cx="32" cy="30" r="5" fill="#fff" /><path d="M27 38C29 36 35 36 37 38L35 53C34 55 30 55 29 53Z" fill="#fff" />
  </Icon>
);
const AppleTv = () => (
  <Icon>
    <defs><Grad id="atv" from="#333" to="#000" /></defs>
    <circle cx="32" cy="32" r="31.500" fill="#24282b" /><circle cx="32" cy="32" r="29" fill="url(#atv)" />
    <g transform="translate(11 22)"><FaApple size={19} color="#fff" /></g>
    <text x="30" y="39" fontSize="22" fill="#fff" fontFamily="Inter">tv</text>
  </Icon>
);
const AppStore = () => (
  <Icon>
    <defs><Grad id="as" from="#4fb8f8" to="#1c54e8" /></defs>
    <circle cx="32" cy="32" r="31.500" fill="#1f56cf" /><circle cx="32" cy="32" r="29.500" fill="url(#as)" />
    <g stroke="#eef4fb" strokeWidth="5" strokeLinecap="round"><path d="M28 14L45 46M36 14L21 39M14 38H37M44 38H50M17 44L16 46" /></g>
  </Icon>
);
const Prefs = () => (
  <Icon>
    <defs><Grad id="pf" from="#c9d5dc" to="#767676" /></defs>
    <rect x="1" y="3" width="62" height="58" rx="2" fill="url(#pf)" />
    <circle cx="32" cy="33" r="27" fill="#2b2d2f" /><circle cx="32" cy="33" r="22" fill="none" stroke="#b5b5b5" strokeWidth="5" strokeDasharray="2.500 2" />
    <circle cx="32" cy="33" r="17" fill="#3f4143" stroke="#bdbdbd" strokeWidth="5" /><path d="M32 33L24 18M32 33L24 48M32 33H49" stroke="#bdbdbd" strokeWidth="3" /><circle cx="32" cy="33" r="4" fill="#8a8a8a" />
  </Icon>
);
const Chrome = () => (
  <Icon>
    <circle cx="32" cy="32" r="31.500" fill="#f6c945" />
    <path d="M32 32L4.500 17A31.500 31.500 0 0 1 60 18H32Z" fill="#d8493c" /><path d="M32 32L4.700 16.500A31.500 31.500 0 0 0 32 63.500L44 39Z" fill="#3f9d58" /><path d="M32 18H60A31.500 31.500 0 0 1 32 63.500L44 39Z" fill="#f9cf55" />
    <circle cx="32" cy="32" r="14" fill="#f5f5f5" /><circle cx="32" cy="32" r="11.500" fill="#4a80e8" />
  </Icon>
);
const WordTile = ({ small }) => (
  <g transform={small ? "translate(41 43) scale(.36)" : ""}>
    <rect x="15" y="5" width="47" height="14" rx="2" fill="#57a3e8" /><rect x="15" y="19" width="47" height="14" fill="#3a7fd5" /><rect x="15" y="33" width="47" height="13" fill="#2359b5" /><rect x="15" y="46" width="47" height="14" rx="2" fill="#1b4190" />
    <rect x="0" y="16" width="32" height="32" rx="3" fill="#1f57b8" />
    <text x="16" y="40" fontSize="24" fontWeight="700" textAnchor="middle" fill="#fff" fontFamily="Roboto">W</text>
  </g>
);
const Word = () => <Icon><WordTile /></Icon>;
const Xcode = () => (
  <Icon>
    <path d="M0 14L44 5L58 52L8 62Z" fill="#3f9be8" /><path d="M4 17L41 9L53 49L11 58Z" fill="none" stroke="#a9d6f7" />
    <path d="M13 52L27 18L44 48M10 42L44 35" stroke="#9fd0f5" strokeWidth="2" fill="none" />
    <path d="M43 8L49 9L34 62C33 64 28 63 29 60Z" fill="#24282c" /><path d="M28 3C36 -1 46 -1 53 3L59 1L61 8L54 11C50 9 47 9 45 14L40 12C40 7 36 5 28 3Z" fill="#c9ced3" />
  </Icon>
);
const Terminal = () => (
  <Icon>
    <rect x="1" y="4" width="62" height="56" rx="3" fill="#c9cdd1" /><rect x="3" y="6" width="58" height="52" rx="2" fill="#1c1c1c" />
    <text x="8" y="24" fontSize="16" fontWeight="700" fill="#f1f1f1" fontFamily="DejaVu Sans Mono">&gt;_</text>
  </Icon>
);
const Zoom = () => (
  <Icon><rect x="0" y="0" width="64" height="64" rx="16" fill="#4a86f5" /><path d="M12 21H34a6 6 0 0 1 6 6V43H18a6 6 0 0 1-6-6zM42 28L51 21V43L42 36z" fill="#fff" /></Icon>
);
const QApp = () => (
  <Icon>
    <circle cx="32" cy="32" r="31" fill="#5f8aa8" /><path d="M45 17A20 20 0 1 0 45 47" fill="none" stroke="#050505" strokeWidth="8" />
    <circle cx="35" cy="31" r="12" fill="none" stroke="#fff" strokeWidth="6" /><path d="M43 38L56 49" stroke="#fff" strokeWidth="7" />
  </Icon>
);
const Sourcetree = () => (
  <Icon>
    <defs><Grad id="st" from="#2a73f5" to="#1648c8" /></defs>
    <circle cx="32" cy="32" r="31" fill="url(#st)" /><circle cx="32" cy="27" r="9" fill="none" stroke="#fff" strokeWidth="8" /><rect x="28" y="36" width="8" height="15" fill="#fff" />
  </Icon>
);
const TextEdit = () => (
  <Icon>
    <path d="M4 6L52 0L60 57L12 65Z" fill="#f8f8f8" />
    {[14, 19, 24, 29, 34, 39, 44, 49, 54].map((y) => <path key={y} d={`M${5 + y / 8} ${y}l46 -6`} stroke="#b9bfc5" />)}
    <path d="M54 0L59 1L44 58L39 63L40 56Z" fill="#8fa0ae" /><path d="M54 0L56 0L42 57L40 56Z" fill="#dfe6ec" />
  </Icon>
);
const Telegram = () => (
  <Icon>
    <defs><Grad id="tg" from="#4fb4e8" to="#2c84c4" /></defs>
    <circle cx="32" cy="32" r="32" fill="url(#tg)" /><path d="M10 33L48 18L40 52L29 44L25 50L22 38Z" fill="#f6fafd" /><path d="M22 38L44 22L29 44L25 50Z" fill="#c6dcea" />
  </Icon>
);
const PreviewApp = () => (
  <Icon>
    <path d="M10 4H60V40H10Z" fill="#e7dcc2" /><path d="M13 6H58V20H13Z" fill="#a98a52" />
    <path d="M1 16L52 7L58 50L7 60Z" fill="#fafafa" /><path d="M4 18L50 10L53 28L7 36Z" fill="#6ea6e4" /><path d="M7 32L53 24L55 46L9 56Z" fill="#2f5e9c" /><path d="M8 48L30 44L40 50L10 56Z" fill="#a5825c" /><path d="M28 34l10 4 12-4 4 8-14 3z" fill="#dfe9f2" />
    <path d="M40 40L65 40L63 56C62 62 46 62 44 57Z" fill="#8e7f69" /><circle cx="53" cy="38" r="12" fill="#3a3d42" stroke="#c2c6ca" strokeWidth="3" /><circle cx="53" cy="38" r="7" fill="#7a95b4" />
  </Icon>
);
const JavaApp = () => (
  <Icon>
    <path d="M6 10L46 -3L60 46L20 60Z" fill="#efefec" /><path d="M0 26L40 14L54 52L10 64Z" fill="#f8f8f6" stroke="#c9c9c5" />
    <ellipse cx="30" cy="36" rx="19" ry="9" fill="#e2e2de" stroke="#b9b9b4" /><path d="M15 20C15 32 20 40 29 40C38 40 43 32 43 20Z" fill="#fafafa" stroke="#c2c2bd" /><ellipse cx="29" cy="20" rx="14" ry="6" fill="#fff" stroke="#bbb" /><ellipse cx="29" cy="20.500" rx="11" ry="4" fill="#33231a" />
    <path d="M43 22C52 20 50 32 41 32" fill="none" stroke="#e8e8e5" strokeWidth="3" /><path d="M57 24L62 27L40 62L33 65L35 58Z" fill="#1d1d1f" />
  </Icon>
);
const Folder = () => (
  <Icon>
    <path d="M12 -2L34 -2L50 14V24H12Z" fill="#f2f2f0" /><path d="M30 0V20" stroke="#777" strokeWidth="4" strokeDasharray="3 2" />
    <path d="M2 14C2 12 3 11 5 11H22L28 17H59C61 17 62 18 62 20V57C62 59 61 60 59 60H5C3 60 2 59 2 57Z" fill="#6fb9e6" /><path d="M2 20H62V57C62 59 61 60 59 60H5C3 60 2 59 2 57Z" fill="#8accf2" />
  </Icon>
);
const DocFile = () => (
  <Icon>
    <rect x="2" y="-2" width="60" height="67" fill="#f1f1f1" /><rect x="2" y="-2" width="60" height="3" fill="#2b579a" /><path d="M4 4H60M4 8H58" stroke="#b5bcc6" strokeWidth="2" strokeDasharray="4 2" />
    <rect x="8" y="12" width="48" height="53" fill="#fff" />
    <path d="M13 17H36M13 20H40" stroke="#9a9a9a" />
    {[24, 27, 30, 33, 36, 39, 42, 47, 50, 53, 56, 59, 62].map((y) => <path key={y} d={`M13 ${y}H51`} stroke="#a5a5a5" strokeWidth="1.500" />)}
    <WordTile small />
  </Icon>
);
const Trash = () => (
  <Icon>
    <defs><Grad id="tr" from="#a9b3bd" to="#e4e8ec" /></defs>
    <path d="M6 6L13 57C14 66 50 66 51 57L58 6Z" fill="url(#tr)" opacity=".92" /><ellipse cx="32" cy="7" rx="26" ry="6" fill="#a5aeb8" stroke="#e6e9ec" strokeWidth="2" />
  </Icon>
);

const dock = [
  [
    { n: "Finder", I: Finder, on: true }, { n: "Siri", I: Siri }, { n: "Launchpad", I: Launchpad }, { n: "Safari", I: Safari },
    { n: "Mail", I: Mail, on: true, b: "7,666" }, { n: "Contacts", I: Contacts }, { n: "Calendar", I: Calendar }, { n: "Notes", I: Notes },
    { n: "Reminders", I: Reminders }, { n: "Maps", I: Maps }, { n: "Photos", I: Photos }, { n: "Messages", I: Messages, b: "1" },
    { n: "FaceTime", I: FaceTime, b: "13" }, { n: "Pages", I: Pages }, { n: "Numbers", I: Numbers }, { n: "Keynote", I: Keynote },
    { n: "Music", I: Music, on: true }, { n: "Podcasts", I: Podcasts }, { n: "TV", I: AppleTv }, { n: "App Store", I: AppStore, b: "8" },
    { n: "System Preferences", I: Prefs },
  ],
  [
    { n: "Chrome", I: Chrome, on: true }, { n: "Word", I: Word, on: true }, { n: "Xcode", I: Xcode, on: true }, { n: "Terminal", I: Terminal, on: true },
    { n: "Zoom", I: Zoom, on: true }, { n: "Quick search", I: QApp, on: true }, { n: "Sourcetree", I: Sourcetree, on: true }, { n: "TextEdit", I: TextEdit, on: true },
    { n: "Telegram", I: Telegram, on: true, b: "..87" }, { n: "Preview", I: PreviewApp, on: true }, { n: "Java", I: JavaApp, on: true },
  ],
  [{ n: "Downloads", I: Folder }, { n: "Document", I: DocFile }, { n: "Trash", I: Trash }],
];

function DockItem({ item }) {
  const { I } = item;
  return (
    <button type="button" aria-label={item.n} className="relative flex w-16 flex-col items-center">
      <I />
      {item.on && <span className="mt-[6px] h-2 w-2 rounded-full bg-black" />}
      {item.b && (
        <span className="absolute -top-1 -right-1 flex h-[27px] min-w-[27px] items-center justify-center rounded-full bg-[#e2493c] px-1 text-[16px] leading-none text-white">{item.b}</span>
      )}
    </button>
  );
}

function Dock() {
  return (
    <footer className="absolute right-[58px] bottom-0 left-[70px] flex h-[94px] items-start justify-between rounded-t-[10px] bg-gradient-to-r from-[#45617f] to-[#4f607a] pt-3 pr-[14px]">
      {dock.map((group, g) => (
        <React.Fragment key={g}>
          {g > 0 && <span className="mx-[9px] h-[70px] w-0.5 bg-[#22384f]" />}
          {group.map((item) => <DockItem key={item.n} item={item} />)}
        </React.Fragment>
      ))}
    </footer>
  );
}

export default function App() {
  return (
    <main className="relative h-screen w-full overflow-hidden bg-gradient-to-b from-[#2f5378] via-[#0d1c2e] to-[#0a1624] font-[Inter,sans-serif]">
      <MenuBar />
      <BrowserWindow />
      <BackWindow />
      <PreviewWindow />
      <TalkingBar />
      <Dock />
    </main>
  );
}
